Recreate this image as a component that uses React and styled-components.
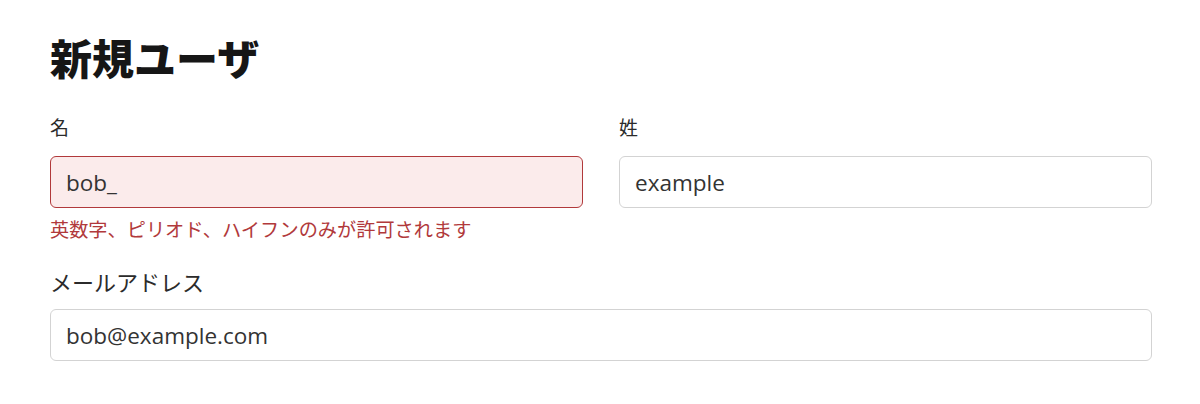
import React from 'react';
import styled, { createGlobalStyle } from 'styled-components';

const GlobalStyle = createGlobalStyle`
  body {
    margin: 0;
    background: #ffffff;
    font-family: "Open Sans", "Noto Sans CJK JP", sans-serif;
    color: #333333;
  }
`;

const Page = styled.div`
  padding: 32px 48px 0 50px;
`;

const Title = styled.h1`
  margin: 0 0 31px;
  font-family: "Noto Sans CJK JP", sans-serif;
  font-size: 42px;
  line-height: 50px;
  font-weight: 800;
  color: #161616;
`;

const Form = styled.form`
  display: flex;
  flex-direction: column;
  gap: 22px;
`;

const Row = styled.div`
  display: grid;
  grid-template-columns: 1fr 1fr;
  column-gap: 36px;
`;

const Field = styled.div`
  display: flex;
  flex-direction: column;
`;

const Label = styled.label`
  font-family: "Noto Sans CJK JP", sans-serif;
  font-size: ${(p) => (p.$large ? '22px' : '19px')};
  line-height: ${(p) => (p.$large ? '32px' : '28px')};
  margin-bottom: ${(p) => (p.$large ? '12px' : '15px')};
  color: #2b2b2b;
`;

const Input = styled.input`
  box-sizing: border-box;
  width: 100%;
  height: 52px;
  padding: 0 15px;
  font-family: "Open Sans", "Noto Sans CJK JP", sans-serif;
  font-size: 22.5px;
  color: #333333;
  border-radius: 6px;
  border: 1.5px solid ${(p) => (p.$invalid ? '#b1393b' : '#d3d3d3')};
  background: ${(p) => (p.$invalid ? '#fbebeb' : '#ffffff')};
  outline: none;
`;

const ErrorText = styled.div`
  margin-top: 7px;
  font-family: "Noto Sans CJK JP", sans-serif;
  font-size: 19.2px;
  line-height: 28px;
  color: #b1393b;
`;

export default function App() {
  return (
    <Page>
      <GlobalStyle />
      <Title>新規ユーザ</Title>
      <Form onSubmit={(e) => e.preventDefault()}>
        <Row>
          <Field>
            <Label htmlFor="first">名</Label>
            <Input id="first" $invalid defaultValue="bob_" />
            <ErrorText>英数字、ピリオド、ハイフンのみが許可されます</ErrorText>
          </Field>
          <Field>
            <Label htmlFor="last">姓</Label>
            <Input id="last" defaultValue="example" />
          </Field>
        </Row>
        <Field>
          <Label htmlFor="email" $large>メールアドレス</Label>
          <Input id="email" defaultValue="bob@example.com" />
        </Field>
      </Form>
    </Page>
  );
}
